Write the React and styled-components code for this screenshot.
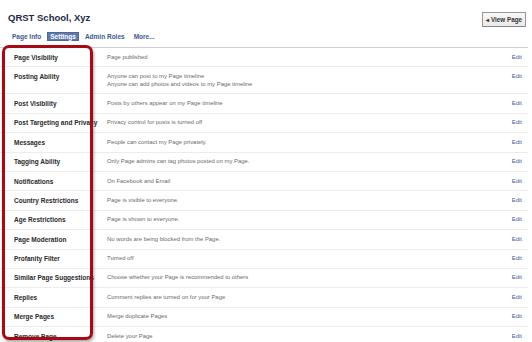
import React from 'react'
import styled, { createGlobalStyle } from 'styled-components'

const GlobalStyle = createGlobalStyle`
    html, body {
        margin: 0;
        padding: 0;
        background: #fff;
    }
    body {
        font-family: "Liberation Sans", Arial, sans-serif;
        -webkit-font-smoothing: antialiased;
    }
`

const rows = [
    { label: 'Page Visibility', desc: ['Page published'] },
    { label: 'Posting Ability', desc: ['Anyone can post to my Page timeline', 'Anyone can add photos and videos to my Page timeline'] },
    { label: 'Post Visibility', desc: ['Posts by others appear on my Page timeline'] },
    { label: 'Post Targeting and Privacy', desc: ['Privacy control for posts is turned off'] },
    { label: 'Messages', desc: ['People can contact my Page privately.'] },
    { label: 'Tagging Ability', desc: ['Only Page admins can tag photos posted on my Page.'] },
    { label: 'Notifications', desc: ['On Facebook and Email'] },
    { label: 'Country Restrictions', desc: ['Page is visible to everyone.'] },
    { label: 'Age Restrictions', desc: ['Page is shown to everyone.'] },
    { label: 'Page Moderation', desc: ['No words are being blocked from the Page.'] },
    { label: 'Profanity Filter', desc: ['Turned off'] },
    { label: 'Similar Page Suggestions', desc: ['Choose whether your Page is recommended to others'] },
    { label: 'Replies', desc: ['Comment replies are turned on for your Page'] },
    { label: 'Merge Pages', desc: ['Merge duplicate Pages'] },
    { label: 'Remove Page', desc: ['Delete your Page'] },
]

const tabs = ['Page Info', 'Settings', 'Admin Roles', 'More...']

export default function App() {
    return (
        <Page>
            <GlobalStyle />
            <Header>
                <div>
                    <Title>QRST School, Xyz</Title>
                    <Tabs>
                        {tabs.map((t) => (
                            <Tab key={t} active={t === 'Settings'}>{t}</Tab>
                        ))}
                    </Tabs>
                </div>
                <ViewButton>◂ View Page</ViewButton>
            </Header>
            <List>
                {rows.map((r) => (
                    <Row key={r.label}>
                        <Label>{r.label}</Label>
                        <Desc>
                            {r.desc.map((d) => <div key={d}>{d}</div>)}
                        </Desc>
                        <EditLink>Edit</EditLink>
                    </Row>
                ))}
            </List>
            <Highlight />
        </Page>
    )
}

const Page = styled.div`
    position: relative;
    width: 532px;
    height: 342px;
    overflow: hidden;
    background: #fff;
`

const Header = styled.div`
    display: flex;
    justify-content: space-between;
    align-items: flex-start;
    padding: 11.5px 6px 0 8px;
`

const Title = styled.div`
    font-size: 9.5px;
    line-height: 11px;
    font-weight: bold;
    color: #1c2a47;
`

const Tabs = styled.div`
    display: flex;
    gap: 3px;
    margin-top: 9.5px;
    padding-left: 1px;
`

const Tab = styled.span`
    font-size: 6.5px;
    line-height: 7px;
    font-weight: bold;
    padding: 1px 3px;
    color: ${(p) => (p.active ? '#fff' : '#3b5998')};
    background: ${(p) => (p.active ? '#6079ab' : 'transparent')};
    box-shadow: ${(p) => (p.active ? 'inset 0 0 0 1px #4f679b' : 'none')};
`

const ViewButton = styled.div`
    margin-top: 0.5px;
    padding: 3px 3px;
    font-size: 6.3px;
    line-height: 7px;
    font-weight: bold;
    color: #333;
    background: linear-gradient(#f7f7f7, #e9e9e9);
    border: 1px solid #999;
    border-bottom-color: #888;
`

const List = styled.div`
    width: 528px;
    margin-top: 6px;
    border-top: 1px solid #cfcfcf;
`

const Row = styled.div`
    display: grid;
    grid-template-columns: 93px 1fr auto;
    align-items: start;
    padding: 5.6px 6px 5.6px 14px;
    line-height: 7.2px;
    border-bottom: 1px solid #ececec;
`

const Label = styled.div`
    font-size: 6.5px;
    font-weight: bold;
    color: #2a2a2a;
    white-space: nowrap;
`

const Desc = styled.div`
    font-size: 5.9px;
    color: #6a6a6a;
    div + div {
        margin-top: 0.4px;
    }
`

const EditLink = styled.span`
    font-size: 5.9px;
    color: #3b5998;
`

const Highlight = styled.div`
    position: absolute;
    left: 2px;
    top: 45px;
    width: 85px;
    height: 289px;
    border: 3px solid #a50b14;
    border-radius: 7px;
    box-shadow: 1px 2px 3px rgba(0, 0, 0, 0.35), inset 0 0 1px rgba(0, 0, 0, 0.3);
`
